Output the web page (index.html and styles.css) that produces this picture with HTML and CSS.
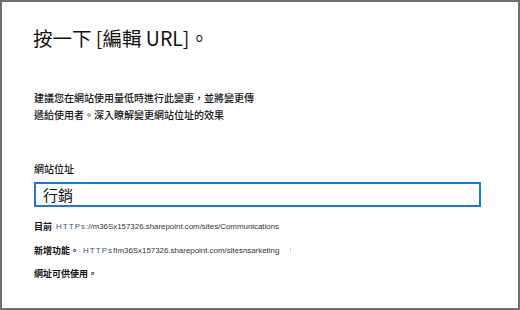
FILE: index.html
```html
<!DOCTYPE html>
<html lang="zh-Hant">
<head>
<meta charset="utf-8">
<link rel="stylesheet" href="styles.css">
</head>
<body>
<div class="frame">
  <h1 class="title">按一下 [編輯 URL]。</h1>
  <p class="desc">建議您在網站使用量低時進行此變更，並將變更傳<br>遞給使用者。深入瞭解變更網站位址的效果</p>
  <div class="field">
    <div class="label">網站位址</div>
    <div class="input">行銷</div>
  </div>
  <div class="info">
    <div class="row"><span class="cjk">目前</span> <span class="url"><span class="proto">HTTPs</span>://m36Sx157326.sharepoint.com/sites/Communications</span></div>
    <div class="row"><span class="cjk">新增功能。</span><span class="url"><span class="proto">HTTPs</span>fIm36Sx157326.sharepoint.com/sitesnsarketing</span><span class="tick"></span></div>
    <div class="row"><span class="cjk">網址可供使用。</span></div>
  </div>
</div>
</body>
</html>
```

FILE: styles.css
```css
* { box-sizing: border-box; }
html, body { margin: 0; padding: 0; background: #fff; }
body { font-family: "Noto Sans CJK TC", "Noto Sans", sans-serif; color: #111; }
.frame {
  width: 520px;
  height: 310px;
  border: 2px solid #707070;
  padding: 0 0 0 31px;
  display: flex;
  flex-direction: column;
}
.title {
  margin: 23px 0 0 0;
  font-size: 19.5px;
  line-height: 26px;
  font-weight: 400;
  color: #111;
}
.desc {
  margin: 38px 0 0 1px;
  font-size: 10px;
  line-height: 17px;
  font-weight: 500;
}
.field { margin-top: 39px; }
.label {
  margin-left: 1px;
  font-size: 10px;
  line-height: 14px;
  font-weight: 500;
}
.input {
  margin-top: 6px;
  margin-left: 1px;
  width: 447px;
  height: 25px;
  border: 2px solid #1a7ad6;
  padding: 0 0 0 7px;
  font-size: 15px;
  line-height: 21px;
}
.info { margin-top: 8px; margin-left: 1px; }
.row {
  height: 23.5px;
  line-height: 23.5px;
  font-size: 9px;
  display: flex;
  align-items: center;
  white-space: nowrap;
}
.cjk { font-weight: 700; font-size: 9px; }
.url {
  font-family: "Liberation Sans", Arial, sans-serif;
  font-size: 7.9px;
  color: #333;
  margin-left: 4px;
}
.proto { letter-spacing: 1.1px; color: #3a4f7a; }
.tick {
  display: inline-block;
  width: 1px;
  height: 6px;
  background: #ddd;
  margin-left: 11px;
}
```
